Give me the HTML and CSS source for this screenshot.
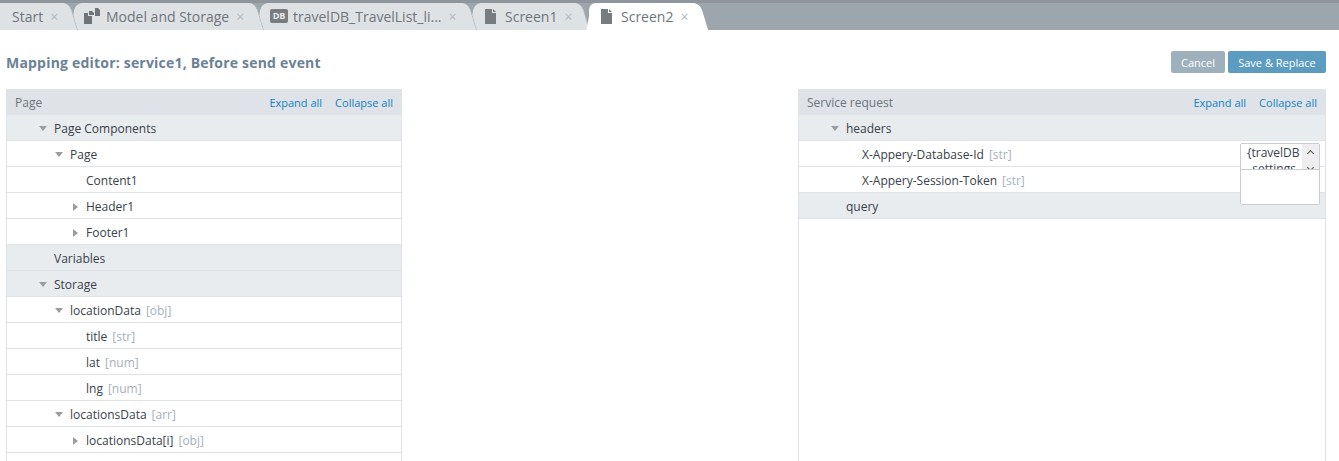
FILE: index.html
```html
<!DOCTYPE html>
<html lang="en">
<head>
<meta charset="utf-8">
<title>Mapping editor</title>
<link rel="stylesheet" href="styles.css">
</head>
<body>
<nav class="tabs">
  <div class="tab tab-start"><span>Start</span><i class="close">×</i></div>
  <div class="tab tab-model">
    <svg class="ico" width="16" height="16" viewBox="0 0 16 16"><path d="M0 5h4v3h4v8H0z" fill="#6f7478"/><path d="M5 3h3l2 2v2H5z" fill="#6f7478"/><path d="M11 0h3l2 2v6h-5z" fill="#6f7478"/></svg>
    <span>Model and Storage</span><i class="close">×</i>
  </div>
  <div class="tab tab-db"><b class="db">DB</b><span>travelDB_TravelList_li...</span><i class="close">×</i></div>
  <div class="tab tab-s1">
    <svg class="ico" width="12" height="15" viewBox="0 0 12 15"><path d="M0 0h7v4h4v11H0z" fill="#777c80"/><path d="M8 0l3 3H8z" fill="#777c80"/></svg>
    <span>Screen1</span><i class="close">×</i>
  </div>
  <div class="tab tab-s2 active">
    <svg class="ico" width="12" height="15" viewBox="0 0 12 15"><path d="M0 0h7v4h4v11H0z" fill="#777c80"/><path d="M8 0l3 3H8z" fill="#777c80"/></svg>
    <span>Screen2</span><i class="close">×</i>
  </div>
</nav>
<main class="editor">
  <header class="head">
    <h1>Mapping editor: service1, Before send event</h1>
    <div class="actions">
      <button class="btn cancel">Cancel</button>
      <button class="btn save">Save &amp; Replace</button>
    </div>
  </header>
  <div class="panels">
    <section class="panel left">
      <div class="panel-head"><span>Page</span><a>Expand all</a><a>Collapse all</a></div>
      <div class="row group l1"><i class="arr down"></i>Page Components</div>
      <div class="row l2"><i class="arr down"></i>Page</div>
      <div class="row l3">Content1</div>
      <div class="row l3"><i class="arr right"></i>Header1</div>
      <div class="row l3"><i class="arr right"></i>Footer1</div>
      <div class="row group l1">Variables</div>
      <div class="row group l1"><i class="arr down"></i>Storage</div>
      <div class="row l2"><i class="arr down"></i>locationData<em>[obj]</em></div>
      <div class="row l3">title<em>[str]</em></div>
      <div class="row l3">lat<em>[num]</em></div>
      <div class="row l3">lng<em>[num]</em></div>
      <div class="row l2"><i class="arr down"></i>locationsData<em>[arr]</em></div>
      <div class="row l3"><i class="arr right"></i>locationsData[i]<em>[obj]</em></div>
    </section>
    <section class="panel right">
      <div class="panel-head"><span>Service request</span><a>Expand all</a><a>Collapse all</a></div>
      <div class="row group l1"><i class="arr down"></i>headers</div>
      <div class="row l2">X-Appery-Database-Id<em>[str]</em></div>
      <div class="row l2">X-Appery-Session-Token<em>[str]</em></div>
      <div class="row group l1">query</div>
      <div class="popup">
        <div class="popup-top">
          <div class="popup-text">{travelDB<br>_settings</div>
          <div class="scroll"><i class="up"></i><i class="dn"></i></div>
        </div>
        <div class="popup-box"></div>
      </div>
    </section>
  </div>
</main>
</body>
</html>
```
FILE: styles.css
```css
* { box-sizing: border-box; }
html, body { margin: 0; height: 100%; overflow: hidden; background: #fff; }
body { font-family: "Open Sans", sans-serif; font-size: 12px; color: #37424a; }

.tabs {
  display: flex;
  height: 30px;
  background: #9da5ad;
  border-top: 3px solid #8e959c;
}
.tab {
  position: relative;
  display: flex;
  align-items: center;
  height: 27px;
  background: #dfe2e5;
  color: #6e757b;
  font-size: 14px;
  border-radius: 7px 7px 0 0;
  margin-right: 8px;
  padding-bottom: 1px;
}
.tab::after {
  content: "";
  position: absolute;
  top: 0;
  right: -5px;
  width: 14px;
  height: 100%;
  background: inherit;
  border-right: 1px solid #b4babf;
  border-radius: 0 7px 0 0;
  transform: skewX(17deg);
}
.tab::before {
  content: "";
  position: absolute;
  top: 0;
  left: -4px;
  width: 12px;
  height: 100%;
  background: inherit;
  border-radius: 7px 0 0 0;
  transform: skewX(-10deg);
}
.tab > * { position: relative; z-index: 1; }
.tab-start { width: 69px; padding-left: 12px; border-top-left-radius: 0; z-index: 5; }
.tab-start::before { display: none; }
.tab-model { width: 178px; padding-left: 7px; z-index: 4; }
.tab-model .ico { margin-right: 6px; }
.tab-db { width: 205px; padding-left: 7px; z-index: 3; }
.tab-s1 { width: 105px; padding-left: 9px; z-index: 2; }
.tab-s2 { width: 110px; padding-left: 12px; z-index: 6; }
.tab-s2::before { left: 0; }
.tab.active { background: #fff; }
.tab.active::after { border-right: 0; }
.ico { margin-right: 8px; flex: none; }
.db {
  width: 18px;
  height: 14px;
  margin-right: 5px;
  background: #777c80;
  color: #e8eaec;
  border-radius: 2px;
  font: bold 9px/14px "Open Sans", sans-serif;
  text-align: center;
}
.close {
  font-style: normal;
  font-size: 14px;
  color: #b3b8bd;
  margin-left: 7px;
}

.editor { padding: 0 13px 0 6px; }
.head {
  display: flex;
  justify-content: space-between;
  align-items: center;
  height: 59px;
  padding-top: 4px;
}
h1 {
  margin: 0;
  padding-top: 2px;
  font-size: 14px;
  font-weight: 700;
  letter-spacing: .2px;
  color: #6a8296;
}
.actions { display: flex; gap: 3px; }
.btn {
  height: 22px;
  border: 0;
  border-radius: 2px;
  color: #fff;
  font: 11px "Open Sans", sans-serif;
  padding: 2px 0 0;
}
.cancel { width: 54px; background: #9fb0bd; }
.save { width: 98px; background: #5b9cc0; }

.panels { display: flex; justify-content: space-between; }
.panel {
  position: relative;
  border: 1px solid #e0e3e6;
  border-width: 0 1px;
  height: 372px;
}
.left { width: 396px; }
.right { width: 528px; }
.panel-head {
  display: flex;
  align-items: center;
  height: 26px;
  margin: 0 -1px;
  padding: 1px 9px 0;
  gap: 13px;
  background: #dfe2e6;
  color: #6e757b;
}
.panel-head span { margin-right: auto; }
.panel-head a { color: #0f84c7; font-size: 11px; }
.row {
  position: relative;
  display: flex;
  align-items: center;
  height: 26px;
  padding-top: 2px;
  border-bottom: 1px solid #e0e3e6;
  color: #37424a;
}
.group { background: #e9ecef; }
.l1 { padding-left: 47px; }
.l2 { padding-left: 63px; }
.l3 { padding-left: 79px; }
.arr { position: absolute; width: 0; height: 0; }
.arr.down {
  margin-left: -15px;
  border-left: 4px solid transparent;
  border-right: 4px solid transparent;
  border-top: 5px solid #9a9ea2;
}
.arr.right {
  margin-left: -13px;
  border-top: 4.5px solid transparent;
  border-bottom: 4.5px solid transparent;
  border-left: 5px solid #9a9ea2;
}
.l1 .arr.down { left: 47px; }
.l2 .arr.down { left: 63px; }
.l3 .arr.right { left: 79px; }
.row em { font-style: normal; color: #a6b0ba; margin-left: 5px; }

.popup {
  position: absolute;
  left: 441px;
  top: 54px;
  width: 80px;
  height: 62px;
  background: #fff;
  border: 1px solid #c9ccd0;
  border-radius: 2px;
}
.popup-top { display: flex; height: 25px; overflow: hidden; }
.popup-text { flex: 1; padding: 1px 0 0 6px; line-height: 16px; color: #37424a; white-space: nowrap; overflow: hidden; }
.scroll { position: relative; width: 17px; background: #eeeeef; }
.scroll i { position: absolute; left: 6px; width: 5px; height: 5px; border-left: 1.5px solid #555; border-top: 1.5px solid #555; transform: rotate(45deg); }
.scroll .up { top: 7px; }
.scroll .dn { top: 21px; transform: rotate(225deg); }
.popup-box { height: 35px; border-top: 1px solid #c9ccd0; background: #fff; }
```
